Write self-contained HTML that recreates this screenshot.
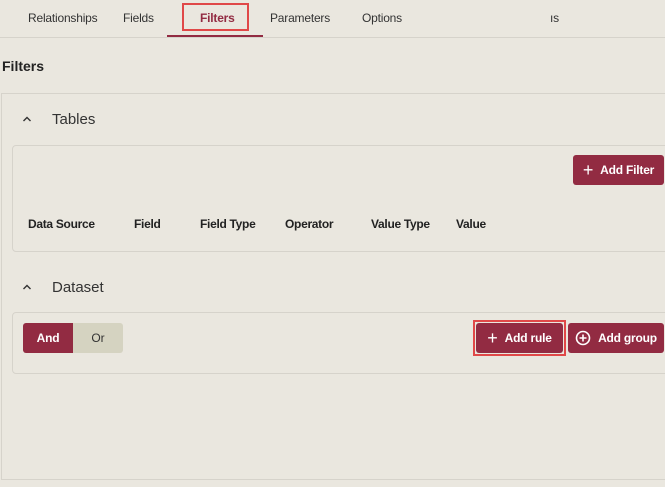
<!DOCTYPE html>
<html><head><style>
*{margin:0;padding:0;box-sizing:border-box}
body{width:665px;height:487px;overflow:hidden;background:#eae7df;font-family:"Liberation Sans",sans-serif;color:#222;position:relative}
.a{position:absolute;white-space:nowrap}
.tab{font-size:12px;color:#333;top:11px;letter-spacing:-0.2px}
.btn{position:absolute;background:#922b42;color:#fff;border-radius:3px;font-size:12px;font-weight:bold;display:flex;align-items:center;justify-content:center;gap:7px;letter-spacing:-0.2px}
.h{font-size:12px;font-weight:bold;top:217px;letter-spacing:-0.3px}
</style></head><body>
<div class="a tab" style="left:28px">Relationships</div>
<div class="a tab" style="left:123px">Fields</div>
<div class="a tab" style="left:200px;color:#922b42;font-weight:bold">Filters</div>
<div class="a tab" style="left:270px">Parameters</div>
<div class="a tab" style="left:362px">Options</div>
<div class="a tab" style="left:550px">ıs</div>
<div class="a" style="left:182px;top:3px;width:67px;height:28px;border:2px solid #e04848"></div>
<div class="a" style="left:167px;top:35px;width:96px;height:2px;background:#922b42"></div>
<div class="a" style="left:0;top:37px;width:665px;height:1px;background:#d6d3cb"></div>
<div class="a" style="left:2px;top:58px;font-size:14px;font-weight:bold">Filters</div>
<div class="a" style="left:1px;top:93px;width:680px;height:387px;border:1px solid #d6d3cb"></div>
<svg class="a" style="left:22px;top:116px" width="10" height="6" viewBox="0 0 10 6"><path d="M1.5 5L5 1.5 8.5 5" fill="none" stroke="#333" stroke-width="1.4"/></svg>
<div class="a" style="left:52px;top:111px;font-size:15px;color:#333">Tables</div>
<div class="a" style="left:12px;top:145px;width:670px;height:107px;border:1px solid #d6d3cb;border-radius:4px"></div>
<div class="btn" style="left:573px;top:155px;width:91px;height:30px"><span style="font-size:18px;font-weight:normal">+</span>Add Filter</div>
<div class="a h" style="left:28px">Data Source</div>
<div class="a h" style="left:134px">Field</div>
<div class="a h" style="left:200px">Field Type</div>
<div class="a h" style="left:285px">Operator</div>
<div class="a h" style="left:371px">Value Type</div>
<div class="a h" style="left:456px">Value</div>
<svg class="a" style="left:22px;top:284px" width="10" height="6" viewBox="0 0 10 6"><path d="M1.5 5L5 1.5 8.5 5" fill="none" stroke="#333" stroke-width="1.4"/></svg>
<div class="a" style="left:52px;top:279px;font-size:15px;color:#333">Dataset</div>
<div class="a" style="left:12px;top:312px;width:670px;height:62px;border:1px solid #d6d3cb;border-radius:4px"></div>
<div class="btn" style="left:23px;top:323px;width:50px;height:30px;border-radius:3px 0 0 3px">And</div>
<div class="a" style="left:73px;top:323px;width:50px;height:30px;background:#d5d3c1;border-radius:0 3px 3px 0;font-size:12px;display:flex;align-items:center;justify-content:center;color:#333">Or</div>
<div class="a" style="left:473px;top:320px;width:93px;height:36px;border:2px solid #e04848"></div>
<div class="btn" style="left:476px;top:323px;width:87px;height:30px"><span style="font-size:18px;font-weight:normal">+</span>Add rule</div>
<div class="btn" style="left:568px;top:323px;width:96px;height:30px"><svg width="16" height="16" viewBox="0 0 16 16"><circle cx="8" cy="8" r="6.5" fill="none" stroke="#fff" stroke-width="1.6"/><path d="M8 4.5v7M4.5 8h7" stroke="#fff" stroke-width="1.6"/></svg>Add group</div>
</body></html>
